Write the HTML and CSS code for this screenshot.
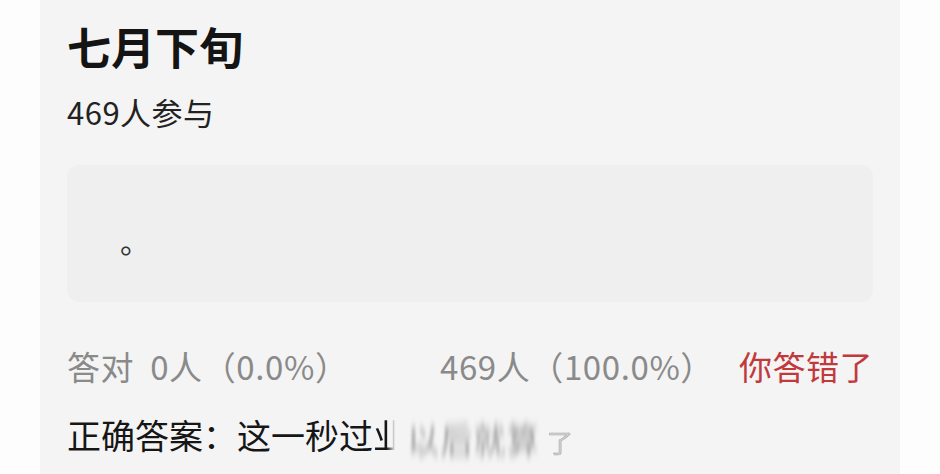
FILE: index.html
```html
<!DOCTYPE html>
<html lang="zh-CN">
<head>
    <meta charset="UTF-8">
    <meta name="viewport" content="width=device-width, initial-scale=1.0">
    <title>七月下旬</title>
    <link rel="stylesheet" href="styles.css">
</head>
<body>
    <!-- vertical smear used on the hidden part of the answer -->
    <svg class="defs" width="0" height="0" aria-hidden="true">
        <filter id="smear" x="-20%" y="-40%" width="140%" height="180%">
            <feGaussianBlur stdDeviation="1.6 5"/>
        </filter>
    </svg>

    <div class="quiz-card">
        <h1 class="quiz-title">七月下旬</h1>
        <p class="quiz-count">469人参与</p>

        <div class="answer-box">
            <span class="answer-text">。</span>
        </div>

        <div class="stats">
            <span class="stat stat-right">答对&nbsp;&nbsp;0人（0.0%）</span>
            <span class="stat stat-wrong">469人（100.0%）</span>
            <span class="result">你答错了</span>
        </div>

        <p class="correct">正确答案：这一秒过<span class="fade">业</span><span class="smudge">以后就算</span><span class="tail">了</span></p>
    </div>
</body>
</html>
```

FILE: styles.css
```css
/* Page */
body {
    margin: 0;
    padding: 0 40px;
    background-color: #fdfdfd;
    font-family: "Noto Sans CJK SC", "Noto Sans", sans-serif;
    color: #1a1a1a;
}

.defs {
    position: absolute;
}

/* Card */
.quiz-card {
    width: 806px;
    padding: 14px 27px 20px;
    background-color: #f4f4f4;
    height: 440px;
    overflow: hidden;
}

.quiz-title {
    margin: 0;
    font-size: 44px;
    line-height: 64px;
    font-weight: 700;
    color: #141414;
}

.quiz-count {
    margin: 14px 0 0;
    font-size: 31px;
    line-height: 40px;
    letter-spacing: 0.5px;
    color: #222;
}

/* Answer box */
.answer-box {
    margin-top: 33px;
    height: 137px;
    border-radius: 12px;
    background-color: #efefef;
    display: flex;
    align-items: center;
    padding-left: 53px;
}

.answer-text {
    font-size: 30px;
    color: #333;
    padding-top: 12px;
}

/* Stats row */
.stats {
    margin-top: 42px;
    display: flex;
    align-items: center;
    font-size: 33px;
    line-height: 44px;
}

.stat {
    color: #8a8a8a;
    letter-spacing: 0.6px;
}

.stat-right {
    width: 373px;
}

.result {
    margin-left: auto;
    color: #c03a3c;
    letter-spacing: 0.5px;
}

/* Correct answer */
.correct {
    margin: 24px 0 0;
    font-size: 34px;
    line-height: 46px;
    color: #161616;
    white-space: nowrap;
}

.fade {
    -webkit-mask-image: linear-gradient(to right, #000 40%, transparent 65%);
    mask-image: linear-gradient(to right, #000 40%, transparent 65%);
}

.smudge {
    display: inline-block;
    color: #7a7a7a;
    filter: url(#smear);
    letter-spacing: 1px;
    opacity: 0.75;
    transform: translateY(4px) scaleX(0.95);
    transform-origin: left center;
}

.tail {
    display: inline-block;
    color: #d2d2d2;
    -webkit-text-stroke: 0.6px #a8a8a8;
    filter: blur(0.6px);
    font-size: 26px;
    transform: translateY(4px);
}
```
